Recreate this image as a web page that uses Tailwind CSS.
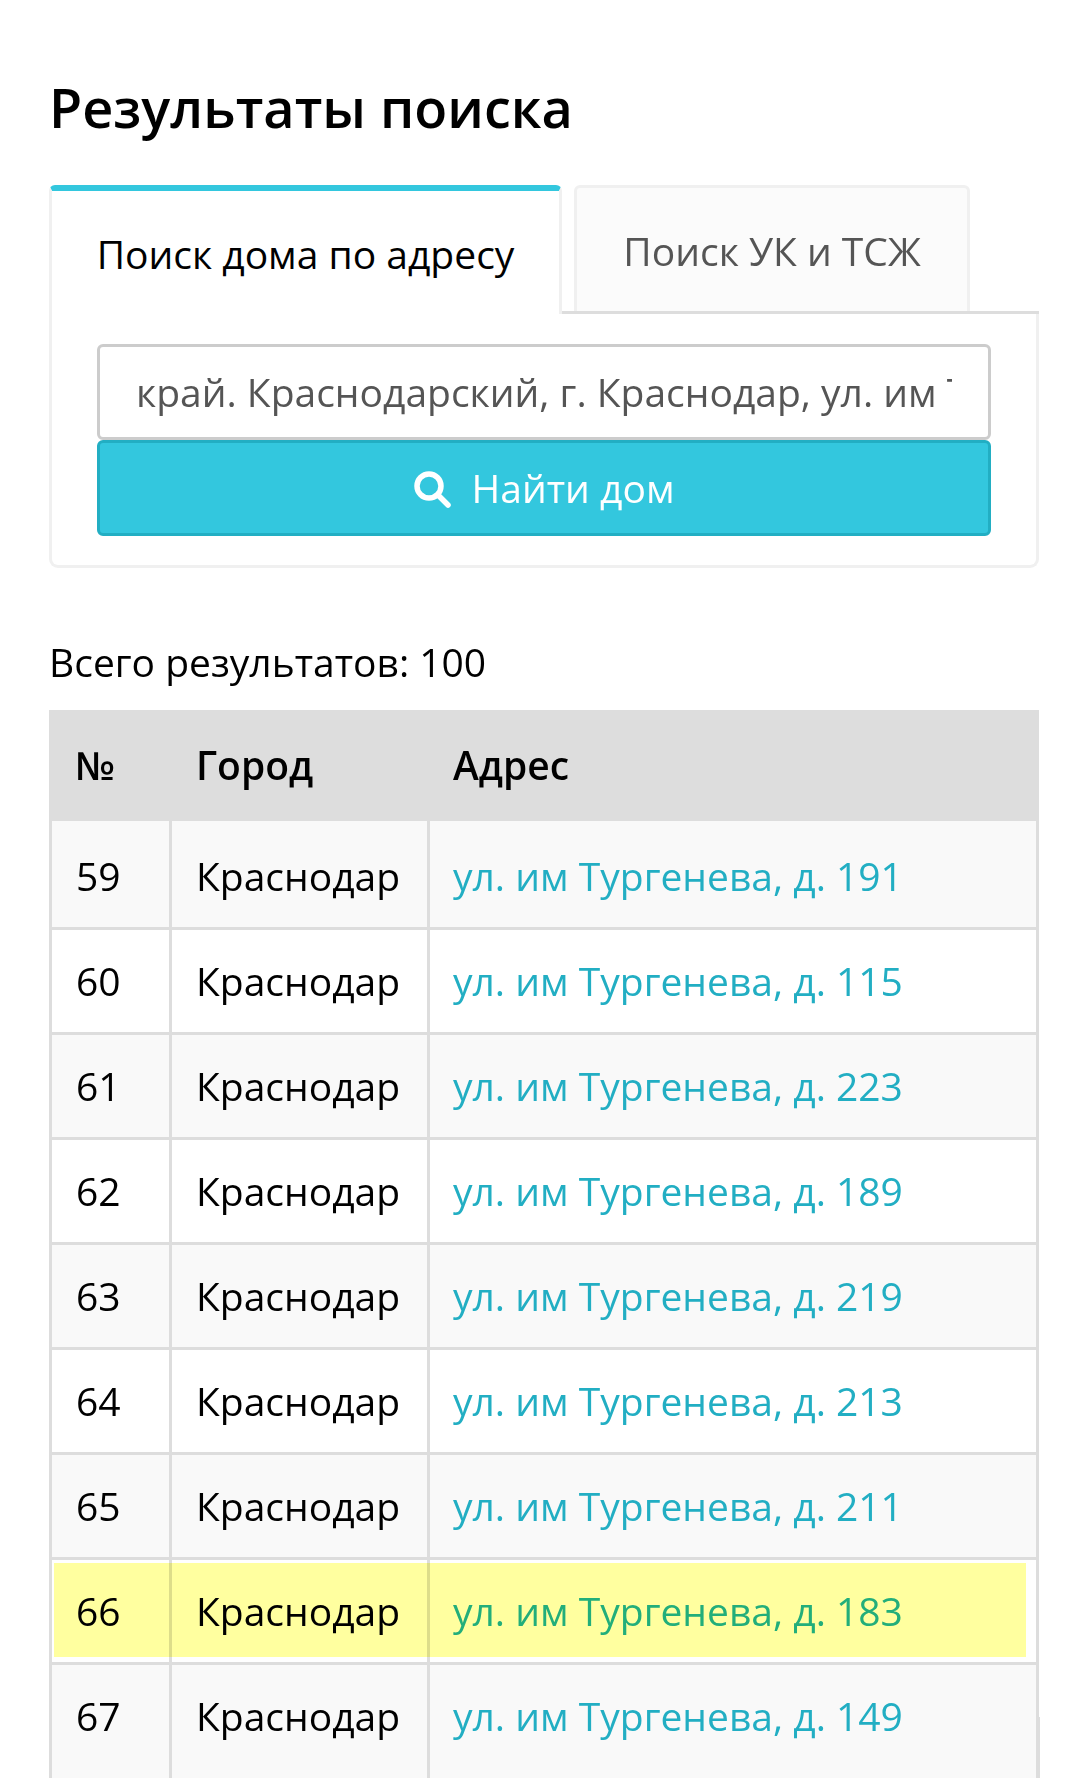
<!DOCTYPE html>
<html lang="ru"><head><meta charset="utf-8"><script src="https://cdn.jsdelivr.net/npm/@tailwindcss/browser@4"></script><title>Результаты поиска</title></head>
<body class="bg-white font-['Open_Sans',sans-serif] text-black overflow-hidden">
<div class="w-[1080px] h-[1778px] overflow-hidden pl-[49px] pr-[41px]">
<h1 class="pt-[74px] h-[185px] text-[54px] leading-[66px] font-semibold">Результаты поиска</h1>
<div class="flex h-[129px] items-start relative">
  <div class="w-[513px] h-[129px] border-x-[3px] border-[#f0f0f0] rounded-t-[6px] relative z-10 bg-white flex justify-center pt-[36px] border-t-[6px] border-t-[#33c7de] text-[39px] leading-[53px]">Поиск дома по адресу</div>
  <div class="w-[12px]"></div>
  <div class="w-[396px] h-[126px] border-x-[3px] border-t-[3px] border-[#f0f0f0] rounded-t-[6px] bg-[#fbfbfb] flex justify-center pt-[36px] text-[39px] leading-[53px] text-[#555555]">Поиск УК и ТСЖ</div>
  <div class="absolute left-[513px] right-0 top-[126px] h-[3px] bg-[#dddddd]"></div>
</div>
<div class="h-[254px] border-x-[3px] border-b-[3px] border-[#f0f0f0] rounded-b-[9px] pl-[45px] pr-[45px] pt-[30px]">
  <div class="h-[96px] border-[3px] border-[#cccccc] rounded-[6px] pl-[36px] pr-[36px] text-[39px] leading-[90px] text-[#555555] whitespace-nowrap"><div class="overflow-hidden">край. Краснодарский, г. Краснодар, ул. им Тургенева</div></div>
  <div class="h-[96px] border-[3px] border-[#22aec3] rounded-[6px] bg-[#33c7de] flex items-center justify-center gap-[21px] text-white text-[39px]">
    <svg class="w-[37px] h-[37px] mt-[2px]" viewBox="0 0 37 37" fill="none" stroke="white" stroke-linecap="round"><circle cx="15" cy="15" r="12" stroke-width="5.5"/><path d="M24 24 L34 34" stroke-width="5.5"/></svg>
    <span>Найти дом</span>
  </div>
</div>
<p class="mt-[67px] h-[75px] text-[39px] leading-[53px]">Всего результатов: 100</p>
<div class="relative w-[990px]">
<table class="w-[990px] table-fixed border-separate border-spacing-0 text-[39px]">
  <colgroup><col class="w-[123px]"><col class="w-[258px]"><col class="w-[609px]"></colgroup>
  <thead><tr class="h-[111px] text-left"><th class="pl-[26px] font-semibold bg-[#dddddd]">№</th><th class="pl-[24px] font-semibold bg-[#dddddd]">Город</th><th class="pl-[23px] font-semibold bg-[#dddddd]">Адрес</th></tr></thead>
  <tbody class="[&_td]:border-r-[3px] [&_td]:border-b-[3px] [&_td]:border-[#dddddd] [&_td:first-child]:border-l-[3px] [&_td]:pl-[24px] [&_td:last-child]:pl-[23px] [&_tr]:h-[105px] [&_a]:text-[#22aec3]">
    <tr class="bg-[#f9f9f9]"><td class="h-[109px] pt-[4px]">59</td><td class="pt-[4px]">Краснодар</td><td class="pt-[4px]"><a>ул. им Тургенева, д. 191</a></td></tr>
    <tr class="bg-white"><td>60</td><td>Краснодар</td><td><a>ул. им Тургенева, д. 115</a></td></tr>
    <tr class="bg-[#f9f9f9]"><td>61</td><td>Краснодар</td><td><a>ул. им Тургенева, д. 223</a></td></tr>
    <tr class="bg-white"><td>62</td><td>Краснодар</td><td><a>ул. им Тургенева, д. 189</a></td></tr>
    <tr class="bg-[#f9f9f9]"><td>63</td><td>Краснодар</td><td><a>ул. им Тургенева, д. 219</a></td></tr>
    <tr class="bg-white"><td>64</td><td>Краснодар</td><td><a>ул. им Тургенева, д. 213</a></td></tr>
    <tr class="bg-[#f9f9f9]"><td>65</td><td>Краснодар</td><td><a>ул. им Тургенева, д. 211</a></td></tr>
    <tr class="bg-white"><td>66</td><td>Краснодар</td><td><a>ул. им Тургенева, д. 183</a></td></tr>
    <tr class="bg-[#f9f9f9]"><td class="h-[150px] align-top pt-[22px]">67</td><td class="align-top pt-[22px]">Краснодар</td><td class="align-top pt-[22px]"><a>ул. им Тургенева, д. 149</a></td></tr>
  </tbody>
</table>
<div class="absolute left-[5px] top-[853px] w-[972px] h-[94px] bg-[#ffff9f] mix-blend-multiply"></div>
<div class="absolute left-[990px] top-[1007px] w-px h-[100px] bg-[#dddddd]"></div>
</div>
</div>
</body></html>
